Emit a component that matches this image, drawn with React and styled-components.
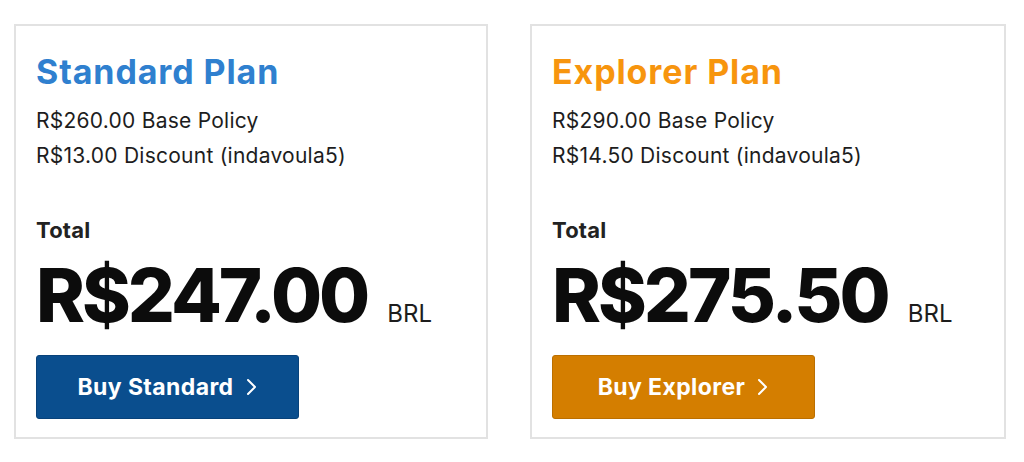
import React from "react";
import styled, { createGlobalStyle } from "styled-components";

const Global = createGlobalStyle`
  html, body { margin: 0; padding: 0; background: #fff; }
  body { font-family: "Inter", "Liberation Sans", sans-serif; color: #1a1a1a; }
`;

const Page = styled.div`
  display: flex;
  gap: 42px;
  padding: 24px 0 0 14px;
  width: 1024px;
  box-sizing: border-box;
`;

const Card = styled.div`
  flex: 0 0 ${(p) => p.$width}px;
  height: 415px;
  box-sizing: border-box;
  border: 2px solid #e2e2e2;
  padding: 26px 20px 0 20px;
  display: flex;
  flex-direction: column;
`;

const Title = styled.h2`
  margin: 0;
  font-size: 34px;
  font-weight: 700;
  line-height: 40px;
  letter-spacing: 0.9px;
  color: ${(p) => p.$color};
`;

const Lines = styled.div`
  margin-top: 16px;
  display: flex;
  flex-direction: column;
  gap: 9px;
`;

const Line = styled.div`
  font-size: 21px;
  line-height: 26px;
  letter-spacing: 0.25px;
  color: #1d1d1d;
`;

const TotalLabel = styled.div`
  margin-top: 47px;
  font-size: 22px;
  font-weight: 700;
  line-height: 28px;
  letter-spacing: 0.2px;
  color: #222;
`;

const PriceRow = styled.div`
  display: flex;
  align-items: baseline;
  gap: 20px;
  margin-top: 9px;
`;

const Price = styled.div`
  font-size: 74px;
  font-weight: 800;
  line-height: 84px;
  color: #0c0c0c;
  letter-spacing: -3px;
`;

const Currency = styled.div`
  font-size: 24px;
  line-height: 28px;
  color: #1d1d1d;
`;

const BuyButton = styled.button`
  margin-top: 18px;
  align-self: flex-start;
  width: 263px;
  height: 64px;
  border-radius: 3px;
  border: 1px solid ${(p) => p.$border};
  background: ${(p) => p.$bg};
  color: #fff;
  font-family: inherit;
  font-size: 23px;
  font-weight: 700;
  letter-spacing: 0.4px;
  display: flex;
  align-items: center;
  justify-content: center;
  gap: 12px;
  cursor: pointer;
`;

const Chevron = () => (
  <svg width="12" height="18" viewBox="0 0 12 18" fill="none">
    <path d="M2 2 L9 9 L2 16" stroke="#fff" strokeWidth="2" strokeLinecap="round" strokeLinejoin="round" />
  </svg>
);

const plans = [
  {
    title: "Standard Plan",
    color: "#2f80cf",
    base: "R$260.00 Base Policy",
    discount: "R$13.00 Discount (indavoula5)",
    total: "R$247.00",
    button: "Buy Standard",
    bg: "#0a4e8e",
    border: "#08427a",
    width: 474,
  },
  {
    title: "Explorer Plan",
    color: "#f7950e",
    base: "R$290.00 Base Policy",
    discount: "R$14.50 Discount (indavoula5)",
    total: "R$275.50",
    button: "Buy Explorer",
    bg: "#d47e00",
    border: "#bb6f00",
    width: 476,
  },
];

export default function App() {
  return (
    <>
      <Global />
      <Page>
        {plans.map((p) => (
          <Card key={p.title} $width={p.width}>
            <Title $color={p.color}>{p.title}</Title>
            <Lines>
              <Line>{p.base}</Line>
              <Line>{p.discount}</Line>
            </Lines>
            <TotalLabel>Total</TotalLabel>
            <PriceRow>
              <Price>{p.total}</Price>
              <Currency>BRL</Currency>
            </PriceRow>
            <BuyButton $bg={p.bg} $border={p.border}>
              {p.button}
              <Chevron />
            </BuyButton>
          </Card>
        ))}
      </Page>
    </>
  );
}
